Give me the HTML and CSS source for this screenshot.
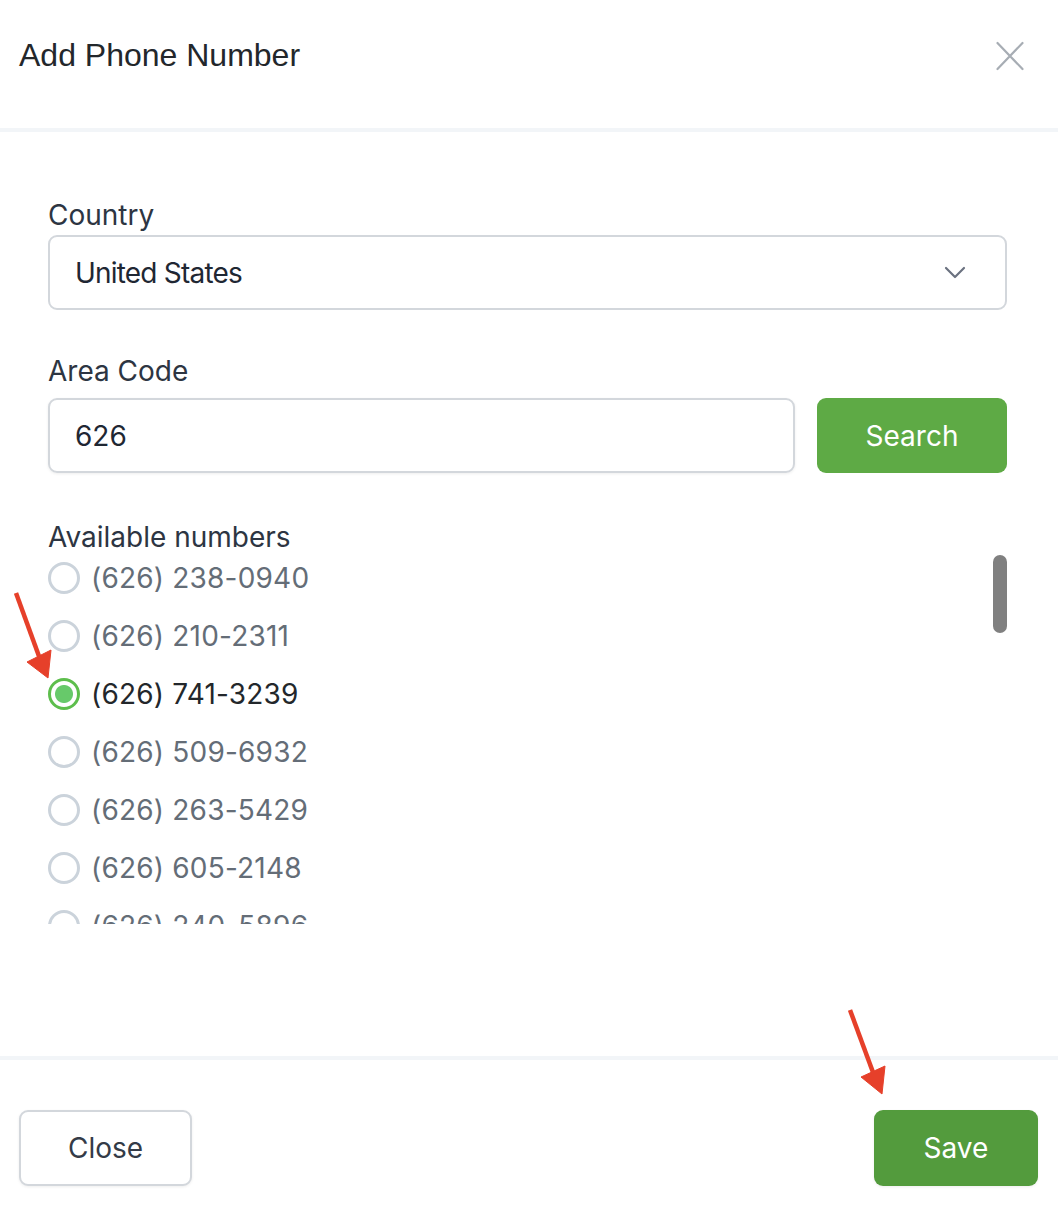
FILE: index.html
```html
<!DOCTYPE html>
<html lang="en">
<head>
<meta charset="utf-8">
<title>Add Phone Number</title>
<link rel="stylesheet" href="styles.css">
</head>
<body>
<div class="modal">
  <header class="modal-header">
    <h1 class="modal-title">Add Phone Number</h1>
    <button class="icon-close" aria-label="Close">
      <svg width="28" height="30" viewBox="0 0 28 30"><path d="M1.5 2 L26.5 28 M26.5 2 L1.5 28" stroke="#a7adb4" stroke-width="2.2" stroke-linecap="round" fill="none"/></svg>
    </button>
  </header>

  <main class="modal-body">
    <label class="field-label label-country">Country</label>
    <div class="select">
      <span class="select-value">United States</span>
      <svg class="chevron" width="22" height="13" viewBox="0 0 22 13"><path d="M2 2 L11 11 L20 2" stroke="#6b7280" stroke-width="2.2" fill="none" stroke-linecap="round" stroke-linejoin="round"/></svg>
    </div>

    <label class="field-label label-area">Area Code</label>
    <div class="search-row">
      <div class="text-input">626</div>
      <button class="btn btn-search">Search</button>
    </div>

    <div class="field-label label-numbers">Available numbers</div>
    <div class="list-wrap">
      <ul class="number-list">
        <li class="number"><span class="radio"></span><span class="num-text">(626) 238-0940</span></li>
        <li class="number"><span class="radio"></span><span class="num-text">(626) 210-2311</span></li>
        <li class="number selected"><span class="radio"></span><span class="num-text">(626) 741-3239</span></li>
        <li class="number"><span class="radio"></span><span class="num-text">(626) 509-6932</span></li>
        <li class="number"><span class="radio"></span><span class="num-text">(626) 263-5429</span></li>
        <li class="number"><span class="radio"></span><span class="num-text">(626) 605-2148</span></li>
        <li class="number"><span class="radio"></span><span class="num-text">(626) 240-5896</span></li>
      </ul>
      <div class="scroll-thumb"></div>
    </div>
  </main>

  <footer class="modal-footer">
    <button class="btn btn-close">Close</button>
    <button class="btn btn-save">Save</button>
  </footer>

  <svg class="annotations" width="1058" height="1212" viewBox="0 0 1058 1212">
    <g fill="#e6402a" stroke="#e6402a">
      <line x1="16" y1="593" x2="40" y2="659" stroke-width="4.5"/>
      <polygon points="27,662 51,650 48,678" stroke-width="1" stroke-linejoin="round"/>
      <line x1="850" y1="1010" x2="874" y2="1075" stroke-width="4.5"/>
      <polygon points="861,1077 885,1066 882,1094" stroke-width="1" stroke-linejoin="round"/>
    </g>
  </svg>
</div>
</body>
</html>
```

FILE: styles.css
```css
* { box-sizing: border-box; }

html, body {
  margin: 0;
  padding: 0;
  background: #ffffff;
}

body {
  font-family: "Inter", "Noto Sans", sans-serif;
  color: #2d3542;
}

.modal {
  position: relative;
  width: 1058px;
  height: 1212px;
  display: flex;
  flex-direction: column;
  background: #ffffff;
}

.modal-header {
  height: 132px;
  flex: none;
  display: flex;
  align-items: flex-start;
  justify-content: space-between;
  padding: 37px 34px 0 19px;
  border-bottom: 4px solid #f2f5f8;
}

.modal-title {
  margin: 0;
  font-family: "Liberation Sans", Arial, sans-serif;
  font-weight: 400;
  font-size: 32px;
  line-height: 37px;
  color: #23272b;
}

.icon-close {
  border: 0;
  background: none;
  padding: 0;
  margin-top: 4px;
  width: 28px;
  height: 30px;
  display: block;
}
.icon-close svg { display: block; }

.modal-body {
  flex: 1;
  display: flex;
  flex-direction: column;
  padding: 0 51px 0 48px;
}

.field-label {
  display: block;
  font-size: 28px;
  line-height: 42px;
  color: #2d3542;
}

.label-country { margin-top: 62px; margin-bottom: -1px; }
.label-area { margin-top: 40px; margin-bottom: 6px; }
.label-numbers { margin-top: 47px; line-height: 34px; margin-bottom: 0; }

.select {
  height: 75px;
  border: 2px solid #d3d7dc;
  border-radius: 9px;
  display: flex;
  align-items: center;
  justify-content: space-between;
  padding: 0 39px 0 25px;
}

.select-value,
.text-input {
  font-size: 28px;
  line-height: 42px;
  color: #1f2733;
}

.select-value { letter-spacing: -0.8px; }

.chevron { display: block; }

.search-row {
  display: flex;
  gap: 22px;
  height: 75px;
}

.text-input {
  flex: 1;
  border: 2px solid #d3d7dc;
  border-radius: 9px;
  display: flex;
  align-items: center;
  padding: 0 25px;
  box-shadow: 0 1px 3px rgba(0, 0, 0, 0.07);
}

.btn {
  font-family: "Inter", "Noto Sans", sans-serif;
  font-size: 28px;
  border-radius: 9px;
  border: 0;
  padding: 0;
  cursor: pointer;
}

.btn-search {
  width: 190px;
  background: #5eaa45;
  color: #ffffff;
}

.list-wrap {
  position: relative;
  margin-top: 1px;
}

.number-list {
  list-style: none;
  margin: 0;
  padding: 0;
  height: 369px;
  overflow: hidden;
  display: flex;
  flex-direction: column;
  gap: 12px;
}

.scroll-thumb {
  position: absolute;
  right: 0;
  top: 0;
  width: 14px;
  height: 78px;
  border-radius: 7px;
  background: #808080;
}

.number {
  flex: none;
  height: 46px;
  display: flex;
  align-items: center;
  gap: 11px;
}

.radio {
  width: 32px;
  height: 32px;
  flex: none;
  border-radius: 50%;
  border: 3px solid #cbd3db;
  background: #ffffff;
}

.num-text {
  font-size: 28px;
  line-height: 42px;
  letter-spacing: 0.2px;
  color: #646d77;
}

.number.selected .radio {
  border-color: #5dbe4c;
  background: radial-gradient(circle, #67c96a 0 8.5px, #ffffff 9.5px);
}

.number.selected .num-text {
  color: #23272b;
}

.modal-footer {
  height: 156px;
  flex: none;
  border-top: 4px solid #f2f5f8;
  display: flex;
  justify-content: space-between;
  align-items: flex-start;
  padding: 50px 20px 0 19px;
}

.btn-close {
  width: 173px;
  height: 76px;
  background: #ffffff;
  border: 2px solid #d3d7dc;
  color: #343b47;
  box-shadow: 0 1px 3px rgba(0, 0, 0, 0.07);
}

.btn-save {
  width: 164px;
  height: 76px;
  background: #539b3d;
  color: #ffffff;
  box-shadow: 0 1px 3px rgba(0, 0, 0, 0.07);
}

.annotations {
  position: absolute;
  left: 0;
  top: 0;
  pointer-events: none;
}
```
